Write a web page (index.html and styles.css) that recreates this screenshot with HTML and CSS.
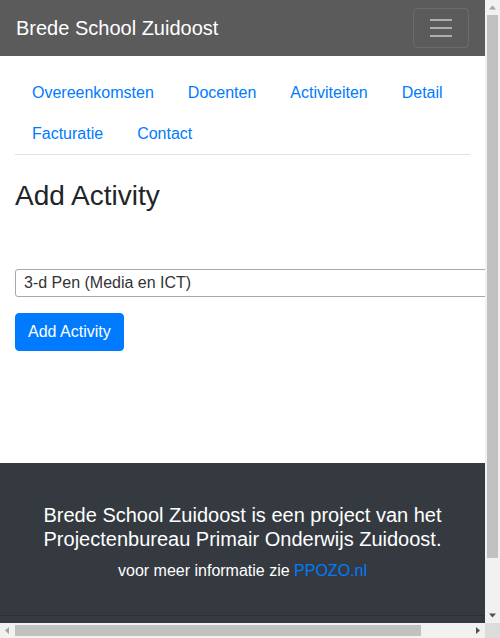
FILE: index.html
```html
<!DOCTYPE html>
<html lang="nl">
<head>
<meta charset="utf-8">
<title>Brede School Zuidoost</title>
<link rel="stylesheet" href="styles.css">
</head>
<body>
<div class="window">
  <div class="viewport">
    <nav class="navbar">
      <a class="brand" href="#">Brede School Zuidoost</a>
      <button class="toggler" type="button" aria-label="Toggle navigation">
        <svg class="toggler-icon" width="30" height="30" viewBox="0 0 30 30">
          <path d="M4 7h22M4 15h22M4 23h22" stroke="rgba(255,255,255,0.5)" stroke-width="2" fill="none"/>
        </svg>
      </button>
    </nav>
    <main class="container">
      <ul class="tabs">
        <li class="tab-item"><a class="tab-link" href="#">Overeenkomsten</a></li>
        <li class="tab-item"><a class="tab-link" href="#">Docenten</a></li>
        <li class="tab-item"><a class="tab-link" href="#">Activiteiten</a></li>
        <li class="tab-item"><a class="tab-link" href="#">Detail</a></li>
        <li class="tab-item"><a class="tab-link" href="#">Facturatie</a></li>
        <li class="tab-item"><a class="tab-link" href="#">Contact</a></li>
      </ul>
      <h3 class="title">Add Activity</h3>
      <form class="activity-form">
        <select class="activity-select">
          <option>3-d Pen (Media en ICT)</option>
        </select>
        <button class="btn-primary" type="button">Add Activity</button>
      </form>
    </main>
    <footer class="footer">
      <div class="footer-main">
        <h5 class="footer-title">Brede School Zuidoost is een project van het Projectenbureau Primair Onderwijs Zuidoost.</h5>
        <p class="footer-text">voor meer informatie zie <a class="footer-link" href="#">PPOZO.nl</a></p>
      </div>
      <div class="footer-bottom"></div>
    </footer>
  </div>
  <div class="vscroll">
    <div class="sb-btn"><svg width="15" height="15" viewBox="0 0 15 15"><polygon points="4,9.5 11,9.5 7.5,5.5" fill="#a3a3a3"/></svg></div>
    <div class="vtrack"><div class="vthumb"></div></div>
    <div class="sb-btn"><svg width="15" height="15" viewBox="0 0 15 15"><polygon points="4,5.5 11,5.5 7.5,9.5" fill="#505050"/></svg></div>
  </div>
  <div class="hscroll">
    <div class="sb-btn"><svg width="15" height="15" viewBox="0 0 15 15"><polygon points="5,7.5 9,4 9,11" fill="#a3a3a3"/></svg></div>
    <div class="htrack"><div class="hthumb"></div></div>
    <div class="sb-btn"><svg width="15" height="15" viewBox="0 0 15 15"><polygon points="10,7.5 6,4 6,11" fill="#505050"/></svg></div>
  </div>
  <div class="corner"></div>
</div>
</body>
</html>
```
FILE: styles.css
```css
* { box-sizing: border-box; }
html, body { margin: 0; padding: 0; overflow: hidden; }
body {
  font-family: "Liberation Sans", Arial, sans-serif;
  font-size: 16px;
  line-height: 1.5;
  color: #212529;
  background: #fff;
}
.window {
  display: grid;
  grid-template-columns: 485px 15px;
  grid-template-rows: 623px 15px;
  width: 500px;
  height: 638px;
}
.viewport {
  overflow: hidden;
  width: 485px;
  height: 623px;
}
.vscroll {
  display: flex;
  flex-direction: column;
  background: #f1f1f1;
}
.hscroll {
  display: flex;
  background: #f1f1f1;
}
.sb-btn {
  flex: 0 0 15px;
  width: 15px;
  height: 15px;
}
.sb-btn svg { display: block; }
.vtrack { flex: 1; padding: 0 2px; }
.vthumb { height: 543px; background: #c1c1c1; }
.htrack { flex: 1; padding: 2px 0; }
.hthumb { width: 406px; height: 11px; background: #c1c1c1; }
.corner { background: #dcdcdc; }

.navbar {
  display: flex;
  align-items: center;
  justify-content: space-between;
  height: 56px;
  padding: 8px 16px;
  background: #5b5b5b;
}
.brand {
  color: #fff;
  font-size: 20px;
  line-height: 30px;
  text-decoration: none;
  padding: 5px 0;
}
.toggler {
  display: flex;
  align-items: center;
  justify-content: center;
  width: 56px;
  height: 40px;
  padding: 4px 12px;
  background: transparent;
  border: 1px solid rgba(255,255,255,0.1);
  border-radius: 4px;
}
.toggler-icon { display: block; }
.container { padding: 16px 15px 0; }
.tabs {
  display: flex;
  flex-wrap: wrap;
  list-style: none;
  margin: 0;
  padding: 0;
  border-bottom: 1px solid #dee2e6;
}
.tab-item { margin-bottom: -1px; }
.tab-link {
  display: block;
  padding: 8px 16px;
  border: 1px solid transparent;
  color: #007bff;
  text-decoration: none;
  line-height: 24px;
}
.title {
  font-size: 28px;
  font-weight: 400;
  line-height: 1.2;
  margin: 24px 0 8px;
}
.activity-form {
  padding-top: 48px;
  padding-bottom: 112px;
}
.activity-select {
  display: block;
  width: 528px;
  height: 28px;
  margin: 0;
  padding: 0 8px;
  font-family: "Liberation Sans", Arial, sans-serif;
  font-size: 16px;
  color: #333;
  background: #fff;
  border: 1px solid #a9a9a9;
  border-radius: 3px;
  -webkit-appearance: none;
  appearance: none;
}
.btn-primary {
  display: block;
  margin-top: 16px;
  height: 38px;
  padding: 6px 12px;
  font-family: "Liberation Sans", Arial, sans-serif;
  font-size: 16px;
  line-height: 24px;
  color: #fff;
  background: #007bff;
  border: 1px solid #007bff;
  border-radius: 4px;
}
.footer {
  background: #343a40;
  color: #fff;
  text-align: center;
}
.footer-main {
  padding: 40px 20px 0;
  height: 152px;
}
.footer-title {
  font-size: 20px;
  font-weight: 400;
  line-height: 24px;
  margin: 0 0 8px;
}
.footer-text { margin: 0; }
.footer-link { color: #007bff; text-decoration: none; }
.footer-bottom {
  height: 65px;
  border-top: 1px solid #2c3136;
}
```
